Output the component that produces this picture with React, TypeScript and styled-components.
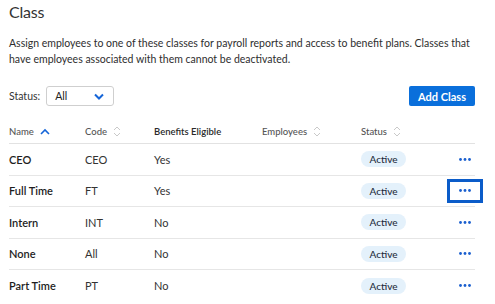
import React from "react"
import styled, { createGlobalStyle } from "styled-components"

const GlobalStyle = createGlobalStyle`
    html, body {
        margin: 0;
        padding: 0;
        background: #fff;
    }
    body {
        font-family: Lato, "Liberation Sans", Arial, sans-serif;
        color: #2b2b2b;
    }
    button {
        font-family: inherit;
    }
`

type Row = {
    name: string
    code: string
    benefits: string
    focused?: boolean
}

const rows: Row[] = [
    { name: "CEO", code: "CEO", benefits: "Yes" },
    { name: "Full Time", code: "FT", benefits: "Yes", focused: true },
    { name: "Intern", code: "INT", benefits: "No" },
    { name: "None", code: "All", benefits: "No" },
    { name: "Part Time", code: "PT", benefits: "No" },
]

const SortIcon = () => (
    <svg width="8" height="11" viewBox="0 0 8 11" fill="none">
        <path d="M1 4L4 1L7 4" stroke="#c9c9c9" strokeWidth="1" />
        <path d="M1 7L4 10L7 7" stroke="#c9c9c9" strokeWidth="1" />
    </svg>
)

const SortUpIcon = () => (
    <svg width="10" height="7" viewBox="0 0 10 7" fill="none">
        <path d="M1 6L5 2L9 6" stroke="#1565d8" strokeWidth="1.6" />
    </svg>
)

const ChevronDown = () => (
    <svg width="10" height="7" viewBox="0 0 10 7" fill="none">
        <path d="M1 1.5L5 5.5L9 1.5" stroke="#1565d8" strokeWidth="2" />
    </svg>
)

const Dots = () => (
    <svg width="12" height="3" viewBox="0 0 12 3">
        <circle cx="1.5" cy="1.5" r="1.4" fill="#1a5fcf" />
        <circle cx="6" cy="1.5" r="1.4" fill="#1a5fcf" />
        <circle cx="10.5" cy="1.5" r="1.4" fill="#1a5fcf" />
    </svg>
)

export default function App() {
    return (
        <Page>
            <GlobalStyle />
            <Title>Class</Title>
            <Description>
                Assign employees to one of these classes for payroll reports and access to benefit plans. Classes that
                have employees associated with them cannot be deactivated.
            </Description>
            <Toolbar>
                <Filter>
                    <FilterLabel>Status:</FilterLabel>
                    <Select>
                        <span>All</span>
                        <ChevronDown />
                    </Select>
                </Filter>
                <PrimaryButton>Add Class</PrimaryButton>
            </Toolbar>
            <Table>
                <HeaderRow>
                    <HeadCell>Name <SortUpIcon /></HeadCell>
                    <HeadCell>Code <SortIcon /></HeadCell>
                    <HeadCell $strong>Benefits Eligible</HeadCell>
                    <HeadCell>Employees <SortIcon /></HeadCell>
                    <HeadCell>Status <SortIcon /></HeadCell>
                    <HeadCell />
                </HeaderRow>
                {rows.map((r, i) => (
                    <BodyRow key={r.name} $last={i === rows.length - 1}>
                        <NameCell>{r.name}</NameCell>
                        <Cell>{r.code}</Cell>
                        <Cell>{r.benefits}</Cell>
                        <Cell />
                        <Cell><Badge>Active</Badge></Cell>
                        <ActionCell>
                            <MoreButton $focused={r.focused}><Dots /></MoreButton>
                        </ActionCell>
                    </BodyRow>
                ))}
            </Table>
        </Page>
    )
}

const Page = styled.div`
    width: 466px;
    padding: 0 20px 0 9px;
`

const Title = styled.h1`
    margin: 0;
    padding-top: 1px;
    font-weight: 400;
    font-size: 16px;
    letter-spacing: -0.2px;
    line-height: 22px;
    color: #333;
`

const Description = styled.p`
    margin: 13px 0 0;
    width: 470px;
    font-size: 10.5px;
    line-height: 15.5px;
    color: #2e2e2e;
`

const Toolbar = styled.div`
    display: flex;
    justify-content: space-between;
    align-items: center;
    margin-top: 19px;
`

const Filter = styled.div`
    display: flex;
    align-items: center;
    gap: 6px;
`

const FilterLabel = styled.span`
    font-size: 10.5px;
    color: #333;
`

const Select = styled.div`
    display: flex;
    align-items: center;
    justify-content: space-between;
    box-sizing: border-box;
    width: 68px;
    height: 20px;
    padding: 0 9px 0 8px;
    border: 1px solid #cfcfcf;
    border-radius: 3px;
    font-size: 10.5px;
    color: #222;
`

const PrimaryButton = styled.button`
    box-sizing: border-box;
    height: 20px;
    padding: 0 9px;
    border: none;
    border-radius: 2px;
    background: #0a6fdb;
    color: #fff;
    font-weight: 700;
    font-size: 11px;
`

const Table = styled.div`
    margin-top: 13px;
`

const rowGrid = `
    display: grid;
    grid-template-columns: 76px 69px 108px 99px 85px 29px;
    align-items: center;
`

const HeaderRow = styled.div`
    ${rowGrid}
    height: 24px;
    border-bottom: 1px solid #e2e2e2;
`

const HeadCell = styled.div<{ $strong?: boolean }>`
    display: flex;
    align-items: center;
    gap: 6px;
    font-size: 9.5px;
    font-weight: ${p => (p.$strong ? 600 : 500)};
    color: ${p => (p.$strong ? "#2a2a2a" : "#555")};
`

const BodyRow = styled.div<{ $last?: boolean }>`
    ${rowGrid}
    height: 31.5px;
    box-sizing: border-box;
    border-bottom: ${p => (p.$last ? "none" : "1px solid #e6e6e6")};
`

const Cell = styled.div`
    font-size: 11px;
    color: #333;
`

const NameCell = styled(Cell)`
    font-weight: 600;
    color: #1e1e1e;
`

const ActionCell = styled.div`
    display: flex;
    justify-content: flex-start;
`

const Badge = styled.span`
    display: inline-flex;
    align-items: center;
    justify-content: center;
    width: 45px;
    height: 16px;
    border-radius: 8px;
    background: #e4f1fb;
    color: #1f2d3d;
    font-weight: 500;
    font-size: 10px;
`

const MoreButton = styled.button<{ $focused?: boolean }>`
    display: flex;
    flex-shrink: 0;
    align-items: center;
    justify-content: center;
    box-sizing: border-box;
    width: 36px;
    height: 24px;
    margin-left: 1px;
    padding: 0;
    background: transparent;
    border: 3px solid ${p => (p.$focused ? "#0b5cc9" : "transparent")};
`
